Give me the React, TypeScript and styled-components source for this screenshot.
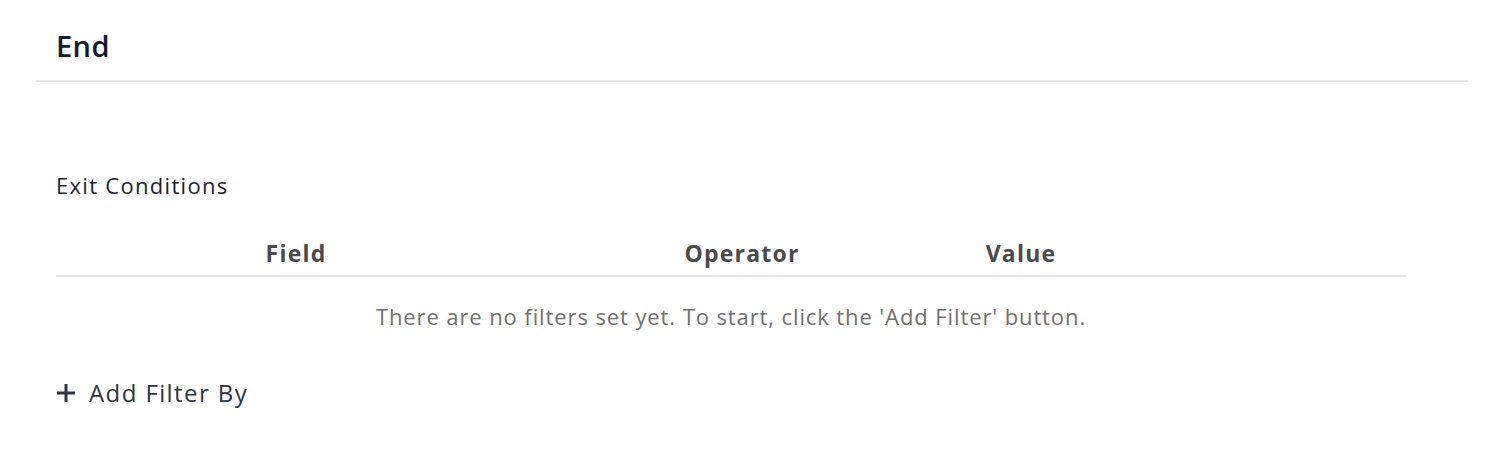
import React from "react";
import styled, { createGlobalStyle } from "styled-components";

const Global = createGlobalStyle`
  html, body { margin: 0; padding: 0; background: #ffffff; }
  body { font-family: "Open Sans", "Lato", sans-serif; -webkit-font-smoothing: antialiased; }
`;

const Page = styled.div`
  width: 1510px;
  height: 476px;
  padding: 0 42px 0 36px;
  box-sizing: border-box;
`;

const Header = styled.div`
  height: 82px;
  padding: 12px 20px 0 20px;
  display: flex;
  align-items: center;
  border-bottom: 2px solid #e6e6ea;
  box-sizing: border-box;
`;

const Title = styled.h2`
  margin: 0;
  font-size: 29px;
  line-height: 36px;
  letter-spacing: 0.4px;
  font-weight: 600;
  color: #161b2b;
`;

const Body = styled.div`
  padding: 89px 20px 0 20px;
  width: 1370px;
`;

const SectionTitle = styled.div`
  font-size: 22px;
  letter-spacing: 1.3px;
  color: #1a1f2e;
  line-height: 28px;
`;

const Table = styled.div`
  margin-top: 32px;
  width: 1350px;
`;

const HeadRow = styled.div`
  display: grid;
  grid-template-columns: 480px 412px 146px 1fr;
  height: 44px;
  align-items: center;
  border-bottom: 2px solid #e6e6ea;
`;

const HeadCell = styled.div`
  text-align: center;
  font-size: 23px;
  line-height: 30px;
  letter-spacing: 1.2px;
  font-weight: 700;
  color: #4a4a4a;
`;

const Empty = styled.div`
  text-align: center;
  font-size: 22px;
  letter-spacing: 0.9px;
  color: #707070;
  padding-top: 26px;
  line-height: 26px;
`;

const AddButton = styled.button`
  margin-top: 49px;
  display: flex;
  align-items: center;
  gap: 13px;
  background: none;
  border: none;
  padding: 0;
  font-family: inherit;
  font-size: 24px;
  line-height: 30px;
  letter-spacing: 1.4px;
  color: #2d3444;
  cursor: pointer;
`;

export default function App() {
  return (
    <>
      <Global />
      <Page>
        <Header>
          <Title>End</Title>
        </Header>
        <Body>
          <SectionTitle>Exit Conditions</SectionTitle>
          <Table>
            <HeadRow>
              <HeadCell>Field</HeadCell>
              <HeadCell>Operator</HeadCell>
              <HeadCell>Value</HeadCell>
              <HeadCell />
            </HeadRow>
            <Empty>There are no filters set yet. To start, click the 'Add Filter' button.</Empty>
          </Table>
          <AddButton>
            <svg width="20" height="20" viewBox="0 0 20 20">
              <path d="M10 1v18M1 10h18" stroke="#2d3444" strokeWidth="3" />
            </svg>
            Add Filter By
          </AddButton>
        </Body>
      </Page>
    </>
  );
}
